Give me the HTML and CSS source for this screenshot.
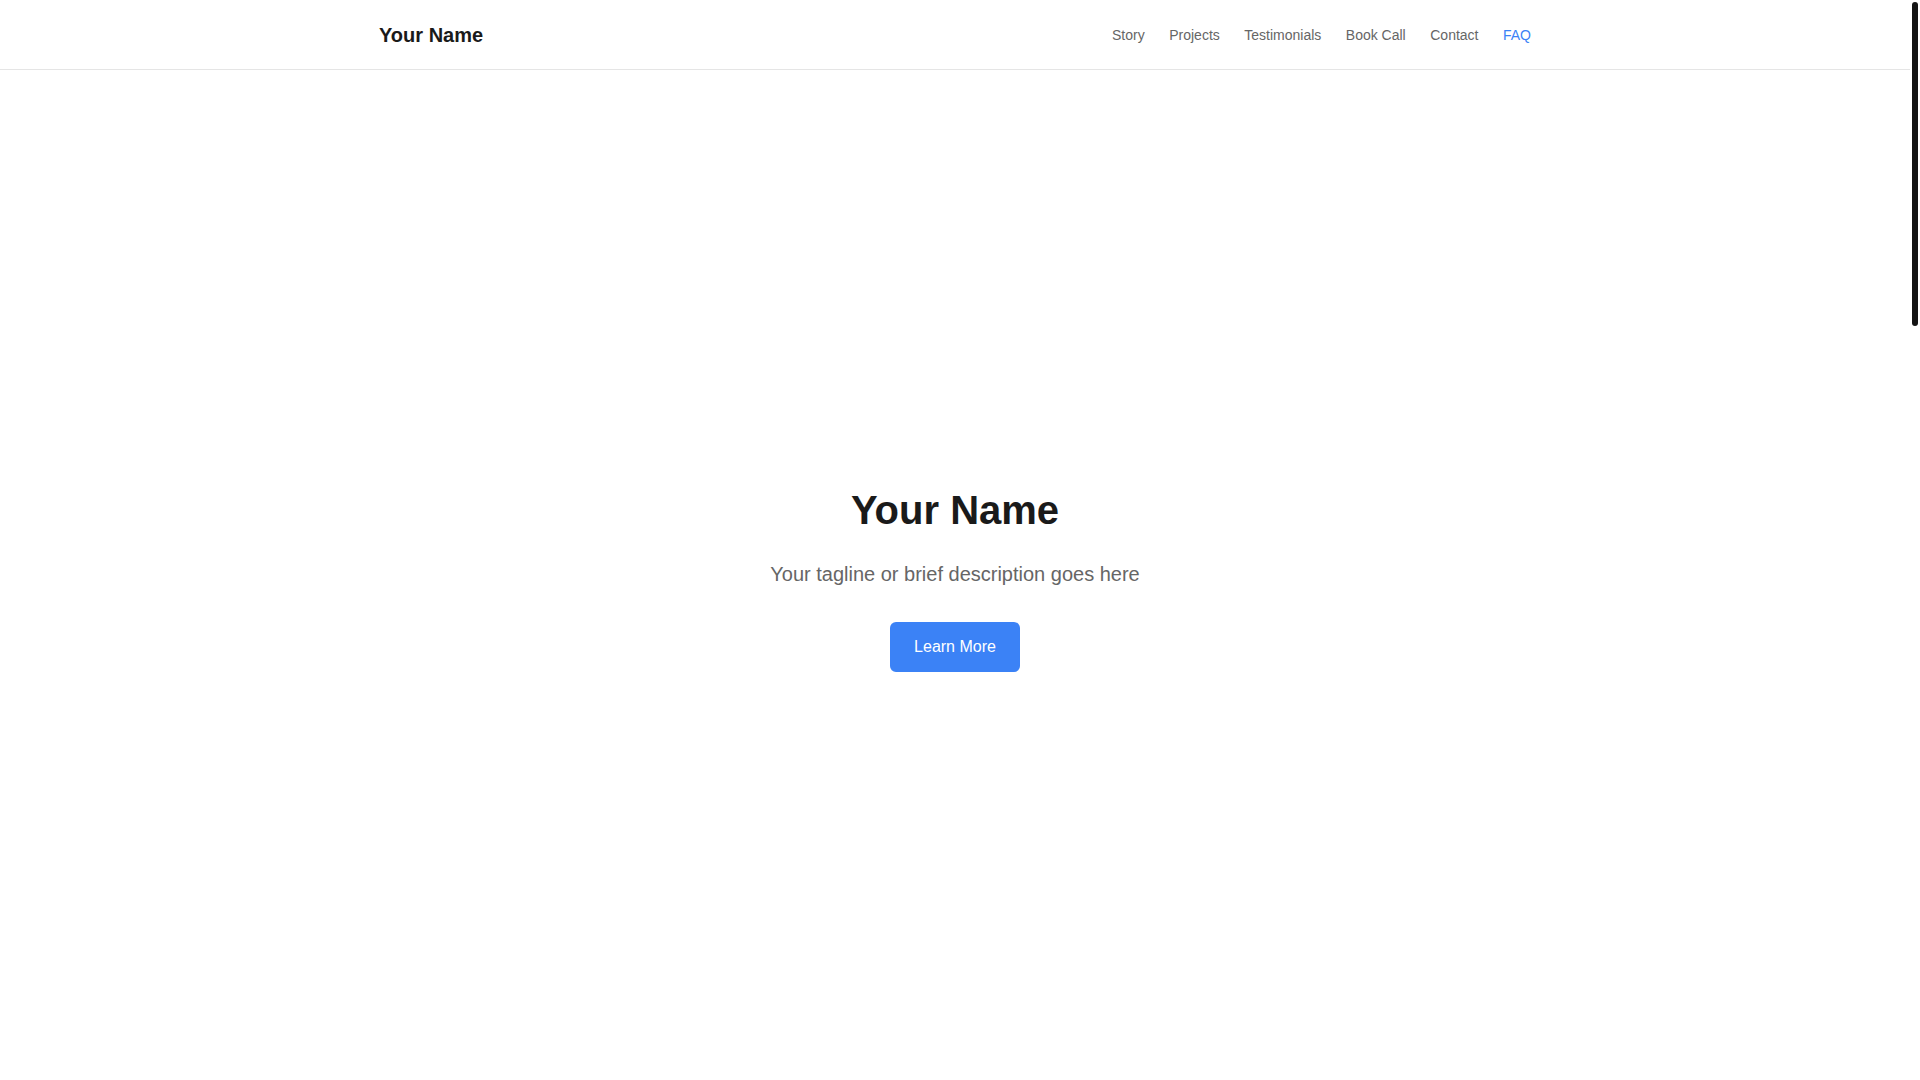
FILE: index.html
```html
<!DOCTYPE html>
<html lang="en">
<head>
<meta charset="utf-8">
<title>Your Name</title>
<link rel="stylesheet" href="styles.css">
</head>
<body>
<div class="viewport">
  <div class="page">
    <header class="site-header">
      <div class="container header-inner">
        <a class="logo" href="#">Your Name</a>
        <nav class="nav">
          <a href="#story">Story</a>
          <a href="#projects">Projects</a>
          <a href="#testimonials">Testimonials</a>
          <a href="#book">Book Call</a>
          <a href="#contact">Contact</a>
          <a href="#faq" class="active">FAQ</a>
        </nav>
      </div>
    </header>
    <main class="hero">
      <div class="hero-content">
        <h1 class="hero-title">Your Name</h1>
        <p class="hero-tagline">Your tagline or brief description goes here</p>
        <a class="btn" href="#story">Learn More</a>
      </div>
    </main>
  </div>
  <div class="scrollbar"><div class="thumb"></div></div>
</div>
</body>
</html>
```

FILE: styles.css
```css
* { box-sizing: border-box; }
body {
  margin: 0;
  font-family: "Liberation Sans", Arial, Helvetica, sans-serif;
  line-height: 1.6;
  color: #1a1a1a;
  background: #ffffff;
  overflow: hidden;
}
a { text-decoration: none; }
.viewport {
  display: flex;
  height: 100vh;
}
.page {
  flex: 1;
  min-width: 0;
  display: flex;
  flex-direction: column;
}
.scrollbar {
  width: 10px;
  padding: 2px;
  background: #ffffff;
}
.thumb {
  height: 324px;
  background: #141414;
  border-radius: 3px;
}
.container {
  width: 100%;
  max-width: 1200px;
  margin: 0 auto;
  padding: 0 24px;
}
.site-header {
  border-bottom: 1px solid #e5e5e5;
  background: #ffffff;
}
.header-inner {
  height: 69px;
  display: flex;
  align-items: center;
  justify-content: space-between;
}
.logo {
  font-size: 20px;
  font-weight: 700;
  color: #1a1a1a;
}
.nav {
  display: flex;
  gap: 24.5px;
  margin-top: 2px;
}
.nav a {
  font-size: 14px;
  color: #666666;
}
.nav a.active { color: #3b82f6; }
.hero {
  flex: 1;
  display: flex;
  align-items: center;
  justify-content: center;
  text-align: center;
  padding-top: 8px;
}
.hero-title {
  margin: 0 0 24px;
  font-size: 40px;
  line-height: 1.2;
  font-weight: 700;
  color: #1a1a1a;
}
.hero-tagline {
  margin: 0 0 32px;
  font-size: 20px;
  color: #666666;
}
.btn {
  display: inline-block;
  padding: 12px 24px;
  font-size: 16px;
  line-height: 1.6;
  color: #ffffff;
  background: #3b82f6;
  border-radius: 6px;
}
```
